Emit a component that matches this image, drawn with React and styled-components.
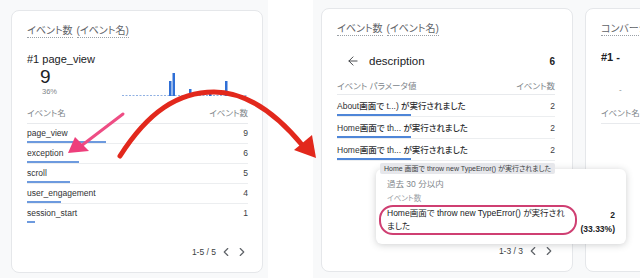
import styled, { createGlobalStyle } from 'styled-components'
import { ChevronLeft, ChevronRight, ArrowLeft } from 'lucide-react'

const GlobalStyle = createGlobalStyle`
  html, body {
    margin: 0;
    padding: 0;
    background: #fff;
  }
  body {
    width: 640px;
    height: 278px;
    overflow: hidden;
    font-family: 'Liberation Sans', 'Noto Sans CJK JP', sans-serif;
    color: #3c4043;
    font-feature-settings: 'palt';
  }
  * {
    box-sizing: border-box;
  }
`

const events = [
  { name: 'page_view', count: 9, bar: 79 },
  { name: 'exception', count: 6, bar: 52 },
  { name: 'scroll', count: 5, bar: 43 },
  { name: 'user_engagement', count: 4, bar: 34 },
  { name: 'session_start', count: 1, bar: 8 },
]

const params = [
  { label: 'About画面で t...) が実行されました', count: 2 },
  { label: 'Home画面で th... が実行されました', count: 2 },
  { label: 'Home画面で th... が実行されました', count: 2 },
]

const chartBars = [
  { x: 47, h: 15 },
  { x: 50.5, h: 23 },
  { x: 67, h: 7 },
  { x: 87, h: 3 },
  { x: 103, h: 15 },
]

export default function App() {
  return (
    <>
      <GlobalStyle />
      <Page>
        <Shot $w="268px" $pad="10px 5px 5px 11px">
          <Card $w={252} $h={263} $pr={14}>
            <Title>
              <Dotted>イベント数</Dotted>
              <Dotted>(イベント名)</Dotted>
            </Title>
            <TopName>#1 page_view</TopName>
            <MetricRow>
              <Metric>
                <Big>9</Big>
                <Pct>36%</Pct>
              </Metric>
              <svg width="126" height="30" viewBox="0 0 126 30">
                <line
                  x1="0"
                  y1="28.5"
                  x2="126"
                  y2="28.5"
                  stroke="#8fb0e3"
                  strokeWidth="1"
                  strokeDasharray="2 1.5"
                />
                {chartBars.map((b, i) => (
                  <rect key={i} x={b.x} y={29 - b.h} width="2.5" height={b.h} fill="#2f6fd6" />
                ))}
              </svg>
            </MetricRow>
            <Header $mt={9} $pb={3}>
              <span>イベント名</span>
              <span>イベント数</span>
            </Header>
            {events.map((e, i) => (
              <Row key={e.name} $pt={3} $last={i === events.length - 1}>
                <Cell>
                  <RowText>{e.name}</RowText>
                  <Bar style={{ width: e.bar }} />
                </Cell>
                <Value>{e.count}</Value>
              </Row>
            ))}
            <Pager>
              <span>1-5 / 5</span>
              <ChevronLeft size={14} strokeWidth={2} />
              <ChevronRight size={14} strokeWidth={2} />
            </Pager>
          </Card>
        </Shot>

        <Shot $w="327px" $pad="8px 0 6px 8px" $ml="45px">
          <Card $w={252} $h={264} $pr={17}>
            <Title>
              <Dotted>イベント数</Dotted>
              <Dotted>(イベント名)</Dotted>
            </Title>
            <DescRow>
              <ArrowLeft size={14} strokeWidth={1.6} />
              <DescName>description</DescName>
              <DescCount>6</DescCount>
            </DescRow>
            <Header $mt={9} $pb={1}>
              <span>イベント パラメータ値</span>
              <span>イベント数</span>
            </Header>
            {params.map((p, i) => (
              <Row key={i} $pt={5}>
                <Cell>
                  <RowText>{p.label}</RowText>
                  <Bar $blue style={{ width: 74 }} />
                </Cell>
                <Value>{p.count}</Value>
              </Row>
            ))}
            <Pager>
              <span>1-3 / 3</span>
              <ChevronLeft size={14} strokeWidth={2} />
              <ChevronRight size={14} strokeWidth={2} />
            </Pager>

            <Tooltip>
              <Chip>Home 画面で throw new TypeError() が実行されました</Chip>
              <TipLabel>過去 30 分以内</TipLabel>
              <TipLabel $small>イベント数</TipLabel>
              <TipRow>
                <Highlight>Home画面で throw new TypeError() が実行されました</Highlight>
                <TipValue>
                  <span>2</span>
                  <span>(33.33%)</span>
                </TipValue>
              </TipRow>
            </Tooltip>
          </Card>

          <Card $w={120} $h={264} $pr={0}>
            <Title>
              <Dotted>コンバージョン(イベント名)</Dotted>
            </Title>
            <TopName $bold>#1 -</TopName>
            <Dash>-</Dash>
            <Header $mt={10} $pb={3}>
              <span>イベント名</span>
            </Header>
          </Card>
        </Shot>

        <Overlay width="640" height="278" viewBox="0 0 640 278">
          <path d="M123 114 L81 146" stroke="#ee4d84" strokeWidth="3" strokeLinecap="round" />
          <polygon points="68,153 75,137 89,151" fill="#ee3f7c" />
          <path
            d="M120 156 C148 112, 178 92, 214 92 C250 92, 280 118, 303 146"
            fill="none"
            stroke="#e2281c"
            strokeWidth="5"
            strokeLinecap="round"
          />
          <polygon points="316,158 294,150 312,135" fill="#e2281c" />
        </Overlay>
      </Page>
    </>
  )
}

const Page = styled.div`
  position: relative;
  display: flex;
  width: 640px;
  height: 278px;
`

const Shot = styled.div`
  flex: 0 0 ${(p) => p.$w};
  margin-left: ${(p) => p.$ml || 0};
  padding: ${(p) => p.$pad};
  background: #f8f9fa;
  display: flex;
  align-items: flex-start;
  gap: 12px;
  overflow: hidden;
`

const Card = styled.section`
  position: relative;
  flex: 0 0 ${(p) => p.$w}px;
  height: ${(p) => p.$h}px;
  background: #fff;
  border: 1px solid #e5e7ea;
  border-radius: 8px;
  padding: 14px ${(p) => p.$pr}px 13px 15px;
  display: flex;
  flex-direction: column;
`

const Title = styled.div`
  display: flex;
  gap: 4px;
  font-size: 10px;
  line-height: 14px;
  color: #5f6368;
  white-space: nowrap;
`

const Dotted = styled.span`
  border-bottom: 1px dotted #9aa0a6;
  line-height: 12px;
`

const TopName = styled.div`
  margin-top: 14px;
  font-size: 11px;
  line-height: 14px;
  font-weight: ${(p) => (p.$bold ? 700 : 500)};
  color: #202124;
`

const MetricRow = styled.div`
  display: flex;
  align-items: flex-end;
  margin-top: 1px;
`

const Metric = styled.div`
  width: 95px;
  padding-left: 13px;
  display: flex;
  flex-direction: column;
`

const Big = styled.div`
  font-size: 19px;
  line-height: 20px;
  color: #202124;
`

const Pct = styled.div`
  padding-left: 2px;
  font-size: 7.5px;
  line-height: 10px;
  color: #80868b;
`

const Header = styled.div`
  display: flex;
  justify-content: space-between;
  margin-top: ${(p) => p.$mt}px;
  padding-bottom: ${(p) => p.$pb}px;
  border-bottom: 1px solid #e8eaed;
  font-size: 8.5px;
  line-height: 14px;
  color: #80868b;
  white-space: nowrap;
`

const Row = styled.div`
  display: grid;
  grid-template-columns: 1fr auto;
  padding-top: ${(p) => p.$pt}px;
  border-bottom: 1px solid ${(p) => (p.$last ? 'transparent' : '#eceef0')};
`

const Cell = styled.div`
  display: flex;
  flex-direction: column;
  align-items: flex-start;
`

const RowText = styled.span`
  font-size: 8.5px;
  line-height: 13px;
  font-weight: 500;
  color: #303134;
  white-space: nowrap;
`

const Bar = styled.span`
  height: 2px;
  margin-top: 1px;
  background: ${(p) => (p.$blue ? '#4f86d8' : '#6d9ade')};
`

const Value = styled.span`
  font-size: 8.5px;
  line-height: 13px;
  color: #3c4043;
`

const Pager = styled.div`
  margin-top: auto;
  display: flex;
  justify-content: flex-end;
  align-items: center;
  gap: 2px;
  margin-right: -1px;
  font-size: 8.5px;
  line-height: 14px;
  color: #3c4043;

  span {
    margin-right: 1px;
  }
  svg {
    color: #5f6368;
  }
`

const DescRow = styled.div`
  display: flex;
  align-items: center;
  margin-top: 16px;
  height: 18px;
  padding-left: 9px;
  color: #3c4043;
`

const DescName = styled.span`
  margin-left: 9px;
  font-size: 11.5px;
  font-weight: 500;
  color: #202124;
`

const DescCount = styled.span`
  margin-left: auto;
  font-size: 10px;
  font-weight: 700;
  color: #202124;
`

const Tooltip = styled.div`
  position: absolute;
  left: 54px;
  top: 160px;
  z-index: 5;
  width: 250px;
  height: 75px;
  padding: 9px 11px 0 3px;
  background: #fff;
  border-radius: 6px;
  box-shadow: 0 1px 7px rgba(60, 64, 67, 0.25);
`

const Chip = styled.div`
  position: absolute;
  left: 4px;
  top: -6px;
  height: 11px;
  padding: 0 4px;
  background: #e6e7eb;
  border-radius: 2px;
  font-size: 7px;
  line-height: 11px;
  color: #3c4043;
  white-space: nowrap;
`

const TipLabel = styled.div`
  padding-left: 8px;
  margin-top: ${(p) => (p.$small ? 3 : 0)}px;
  font-size: ${(p) => (p.$small ? 7.5 : 8.5)}px;
  line-height: 12px;
  color: ${(p) => (p.$small ? '#9aa0a6' : '#80868b')};
`

const TipRow = styled.div`
  display: flex;
  align-items: flex-start;
`

const Highlight = styled.div`
  width: 198px;
  height: 30px;
  padding: 0 10px 0 6px;
  border: 2px solid #cf3f72;
  border-radius: 14px;
  font-size: 8.5px;
  line-height: 13px;
  color: #202124;
`

const TipValue = styled.div`
  flex: 1;
  display: flex;
  flex-direction: column;
  align-items: flex-end;
  padding-top: 3px;
  font-size: 8.5px;
  line-height: 14px;
  font-weight: 700;
  color: #202124;
`

const Dash = styled.div`
  margin-top: 20px;
  padding-left: 18px;
  font-size: 8px;
  line-height: 12px;
  color: #80868b;
`

const Overlay = styled.svg`
  position: absolute;
  left: 0;
  top: 0;
  pointer-events: none;
`
